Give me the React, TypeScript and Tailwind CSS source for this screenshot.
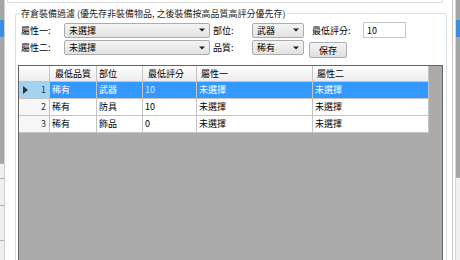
import React from "react";

interface Row {
	id: number;
	quality: string;
	slot: string;
	score: string;
	attr1: string;
	attr2: string;
}

const rows: Row[] = [
	{ id: 1, quality: "稀有", slot: "武器", score: "10", attr1: "未選擇", attr2: "未選擇" },
	{ id: 2, quality: "稀有", slot: "防具", score: "10", attr1: "未選擇", attr2: "未選擇" },
	{ id: 3, quality: "稀有", slot: "飾品", score: "0", attr1: "未選擇", attr2: "未選擇" },
];

function Arrow() {
	return (
		<svg width="6" height="4" viewBox="0 0 6 4" className="shrink-0">
			<path d="M0 0.5 H6 L3 3.5 Z" fill="#1e1e1e" />
		</svg>
	);
}

function Combo({ value, width }: { value: string; width: string }) {
	return (
		<div
			className={`${width} h-[15px] flex items-center justify-between pl-[4px] pr-[4px] border border-[#acacac] rounded-[2px] bg-gradient-to-b from-[#f4f4f4] to-[#e2e2e2]`}
		>
			<span className="leading-[13px]">{value}</span>
			<Arrow />
		</div>
	);
}

function Label({ text, width, ml }: { text: string; width: string; ml: string }) {
	return <span className={`${width} ${ml} shrink-0 leading-[13px]`}>{text}</span>;
}

const cols = ["w-[47px]", "w-[46px]", "w-[54px]", "w-[116px]", "w-[116px]"];

function Cell({ w, children, className = "" }: { w: string; children?: React.ReactNode; className?: string }) {
	return (
		<div className={`${w} h-full shrink-0 flex items-center border-r border-[#c4c4c4] ${className}`}>
			{children}
		</div>
	);
}

function Grid() {
	return (
		<div className="ml-[2px] mt-[6px] w-[425px] h-[220px] border-t border-l border-r border-[#646464] bg-[#ababab]">
			{/* header */}
			<div className="flex h-[16px] border-b border-[#c4c4c4] w-[410px] bg-gradient-to-b from-[#ffffff] to-[#ececec]">
				<Cell w="w-[31px]" />
				<Cell w={cols[0]} className="justify-center">最低品質</Cell>
				<Cell w={cols[1]} className="pl-[2px]">部位</Cell>
				<Cell w={cols[2]} className="pl-[5px]">最低評分</Cell>
				<Cell w={cols[3]} className="pl-[4px]">屬性一</Cell>
				<Cell w={cols[4]} className="pl-[4px]">屬性二</Cell>
			</div>
			{rows.map((r) => {
				const sel = r.id === 1;
				const cellBg = sel ? "bg-[#3399ff] text-white" : "bg-white";
				return (
					<div key={r.id} className="flex h-[17px] w-[410px] border-b border-[#c4c4c4]">
						<Cell
							w="w-[31px]"
							className={`justify-between pl-[4px] pr-[3px] ${sel ? "bg-[#a3d2f2]" : "bg-[#f6f6f6]"}`}
						>
							{sel ? (
								<svg width="5" height="8" viewBox="0 0 5 8">
									<path d="M0 0 L5 4 L0 8 Z" fill="#333" />
								</svg>
							) : (
								<span />
							)}
							<span className="text-[#333]">{r.id}</span>
						</Cell>
						<Cell w={cols[0]} className={`pl-[2px] ${cellBg}`}>{r.quality}</Cell>
						<Cell w={cols[1]} className={`pl-[2px] ${cellBg}`}>{r.slot}</Cell>
						<Cell w={cols[2]} className={`pl-[2px] ${sel ? "bg-[#3399ff] text-[#cfe6ff]" : "bg-white"}`}>{r.score}</Cell>
						<Cell w={cols[3]} className={`pl-[2px] ${cellBg}`}>{r.attr1}</Cell>
						<Cell w={cols[4]} className={`pl-[2px] ${cellBg}`}>{r.attr2}</Cell>
					</div>
				);
			})}
		</div>
	);
}

export default function App() {
	return (
		<div className="w-[460px] h-[260px] bg-white flex overflow-hidden text-[9px] text-black font-['Noto_Sans_CJK_TC','Noto_Sans_CJK_SC',sans-serif]">
			{/* neighbouring window, left */}
			<div className="w-[4px] shrink-0 flex flex-col bg-[#f0f0f0]">
				<div className="h-[20px] bg-[#a6a6a6]" />
				<div className="h-[17px] bg-[#3a8ee6]" />
				<div className="h-[126px] bg-[#a6a6a6]" />
				<div className="h-[15px] border-t border-[#b0b0b0]" />
				<div className="h-[27px] border-t border-[#b0b0b0]" />
				<div className="h-[35px] border-t border-[#b0b0b0]" />
				<div className="flex-1 border-t border-[#b0b0b0]" />
			</div>
			<div className="w-[1px] shrink-0 bg-[#d0d0d0]" />

			{/* main window */}
			<div className="w-[447px] shrink-0 flex flex-col">
				<div className="ml-[2px] w-[436px] h-[3px] shrink-0 border-x border-b border-[#dcdcdc] rounded-b-[2px]" />
				<fieldset className="ml-[10px] mt-[4px] w-[432px] h-[300px] shrink-0 border border-[#d5dfe5] rounded-[3px] p-0">
					<legend className="ml-[4px] px-[1px] leading-[13px] text-[#1e1e1e]">
						存倉裝備過濾 (優先存非裝備物品, 之後裝備按高品質高評分優先存)
					</legend>
					<div className="pt-[2px] flex flex-col">
						<div className="flex items-center h-[16px]">
							<Label text="屬性一:" width="w-[43px]" ml="ml-[5px]" />
							<Combo value="未選擇" width="w-[146px]" />
							<Label text="部位:" width="w-[39px]" ml="ml-[3px]" />
							<Combo value="武器" width="w-[52px]" />
							<Label text="最低評分:" width="w-[51px]" ml="ml-[8px]" />
							<div className="w-[43px] h-[16px] border border-[#c2c7cc] bg-white flex items-center pl-[3px] leading-[13px]">
								10
							</div>
						</div>
						<div className="flex items-start h-[19px] mt-[2px]">
							<div className="flex items-center h-[15px]">
								<Label text="屬性二:" width="w-[43px]" ml="ml-[5px]" />
								<Combo value="未選擇" width="w-[146px]" />
								<Label text="品質:" width="w-[39px]" ml="ml-[3px]" />
								<Combo value="稀有" width="w-[52px]" />
							</div>
							<button className="ml-[5px] mt-[2px] w-[38px] h-[16px] border border-[#acacac] rounded-[2px] bg-gradient-to-b from-[#f4f4f4] to-[#dedede] leading-[13px] text-[9px]">
								保存
							</button>
						</div>
						<Grid />
					</div>
				</fieldset>
			</div>

			{/* neighbouring window, right */}
			<div className="w-[1px] shrink-0 bg-[#c8c8c8]" />
			<div className="w-[2px] shrink-0 bg-white" />
			<div className="w-[1px] shrink-0 bg-[#d8d8d8]" />
			<div className="w-[5px] shrink-0 flex flex-col bg-[#f0f0f0]">
				<div className="h-[20px] bg-[#a6a6a6]" />
				<div className="h-[17px] bg-[#3a8ee6]" />
				<div className="h-[140px] bg-[#a6a6a6]" />
				<div className="flex-1 border-t border-[#b0b0b0]" />
			</div>
		</div>
	);
}
